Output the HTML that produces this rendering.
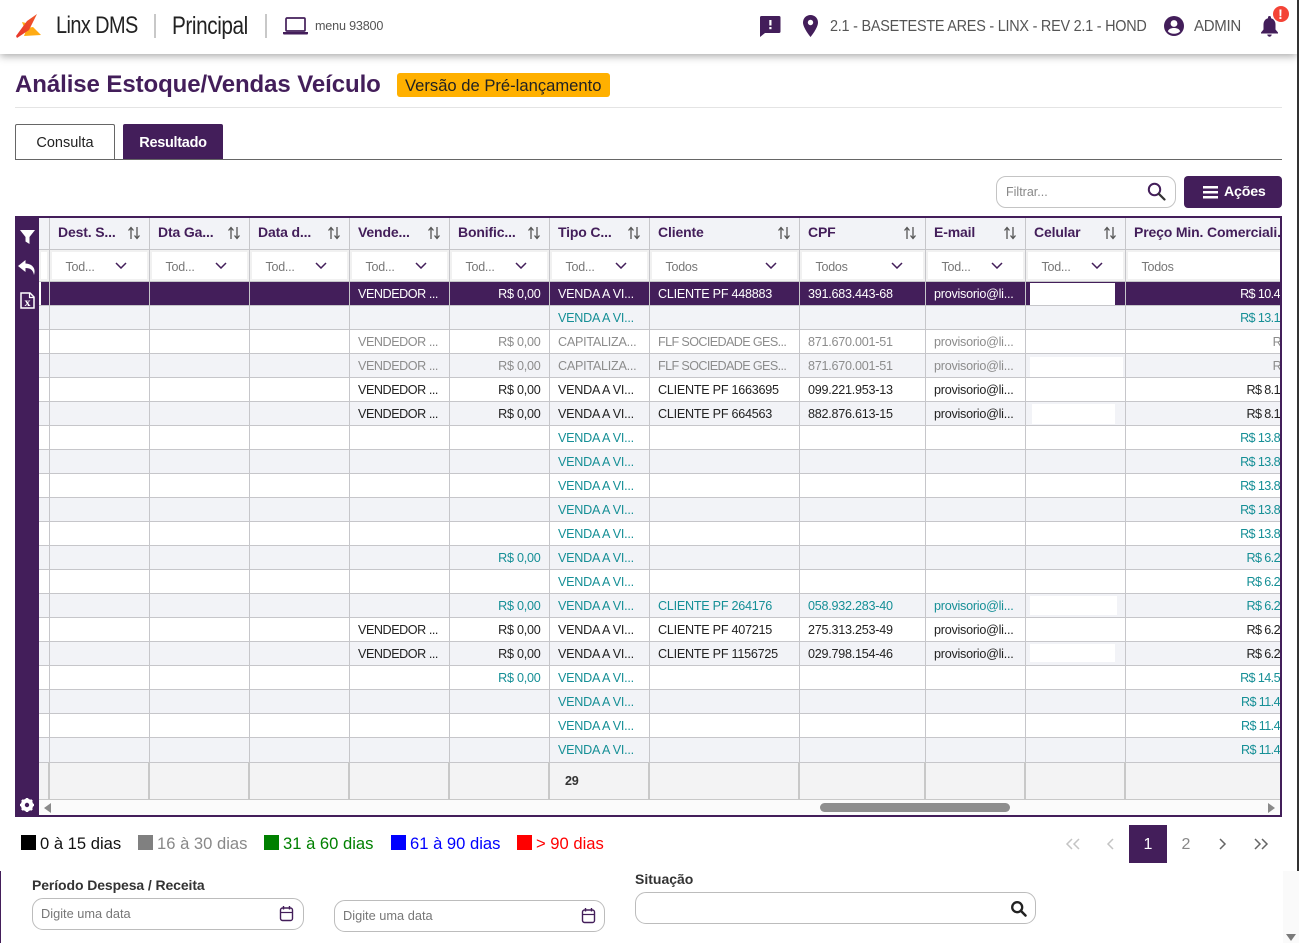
<!DOCTYPE html>
<html lang="pt-BR">
<head>
<meta charset="utf-8">
<title>Linx DMS</title>
<style>
html,body{margin:0;padding:0;width:1299px;height:943px;overflow:hidden;background:#fff;font-family:"Liberation Sans",sans-serif;color:#333}
*{box-sizing:border-box}
.a{position:absolute;white-space:nowrap}
svg{position:absolute;display:block}
#wrap{position:absolute;left:15px;top:216px;width:1267px;height:601px;border:2px solid #431e5a;border-left:0;overflow:hidden;background:#fff}
#side{position:absolute;left:0;top:0;width:24px;height:599px;background:#431e5a}
#clip{position:absolute;left:24px;top:0;width:1241px;height:582px;overflow:hidden}
table{position:absolute;left:0;top:0;border-collapse:collapse;table-layout:fixed;width:1286px}
td,th{padding:0 0 0 8.5px;border:1px solid #c6c6ca;font-size:12.6px;letter-spacing:-.25px;white-space:nowrap;overflow:hidden;font-weight:400;text-align:left}
td:first-child,th:first-child{padding:0;border-left:0}
tr.h th{height:31px;background:#f2f3f7;color:#431e5a;font-weight:700;font-size:14px;letter-spacing:-.15px;border-top:0;position:relative;padding-bottom:2px}
tr.f td{height:32px;background:#fff;color:#777;padding-left:16px;padding-top:3px;box-shadow:inset 0 0 0 2px #f1f1f1;position:relative;font-size:12.5px}
tr.r td{height:24px;color:#222;padding-top:2px}
tr.r:nth-child(even) td{background:#fff}
tr.r.g td{background:#f2f3f7!important}
tr.s td{background:#431e5a!important;color:#fff}
tr.s td:first-child{box-shadow:inset 2px 0 0 #fff}
tr.m td{color:#8c8c8c}
tr.l td{padding-top:0}
td.v{color:#158f96!important}
tr.t td{height:37px;background:#f3f3f4;border-width:1px 2px 1px 2px;border-color:#c8c8c8;font-weight:700;color:#333;padding-left:15px}
td.p{text-align:right;padding:2px 8px 0 0}
td.q{text-align:right;padding:2px 16px 0 0;letter-spacing:-.6px}
tr.l td.q{padding-top:0}
td.n{letter-spacing:-.45px}
td.w{letter-spacing:-.62px}
.so{position:absolute;right:8px;top:8px;width:14px;height:14px}
.ch{position:absolute;right:22px;top:12px}
.bl{position:absolute;background:#fff}
.lg{position:absolute;top:835px;font-size:16.6px;height:18px;line-height:18px;white-space:nowrap}
.lg i{display:inline-block;width:15px;height:15px;vertical-align:-1px;margin-right:4px}
.pg{position:absolute;top:825px;width:38px;height:38px;line-height:40px;text-align:center;font-size:16px;color:#888}
.inp{position:absolute;border:1px solid #bcbcbc;border-radius:11px;background:#fff;font-size:12.8px;color:#777}
</style>
</head>
<body>

<!-- top bar -->
<div class="a" style="left:0;top:0;width:1297px;height:54px;background:#fff;box-shadow:0 2px 8px rgba(0,0,0,.35)"></div>
<svg style="left:15px;top:13px" width="27" height="26" viewBox="0 0 27 26">
<defs><linearGradient id="lg1" x1="0" y1="1" x2="1" y2="0"><stop offset="0" stop-color="#e8352a"/><stop offset="1" stop-color="#f0582a"/></linearGradient></defs>
<polygon points="7,9 15,11 10,17" fill="#ffb21a"/>
<polygon points="12,15 18,14 26,22 9,23" fill="#ffab14"/>
<polygon points="22,1 12,8 1,23 2,25 14,17 18,9" fill="url(#lg1)"/>
</svg>
<div class="a" style="left:56px;top:12px;font-size:24px;line-height:28px;color:#222;letter-spacing:-.7px;transform-origin:0 0;transform:scaleX(.83)">Linx DMS</div>
<div class="a" style="left:154px;top:14px;width:2px;height:24px;background:#c8c8c8"></div>
<div class="a" style="left:172px;top:12px;font-size:25px;line-height:28px;color:#222;letter-spacing:-.5px;transform-origin:0 0;transform:scaleX(.83)">Principal</div>
<div class="a" style="left:265px;top:14px;width:2px;height:24px;background:#c8c8c8"></div>
<svg style="left:282px;top:16px" width="27" height="20" viewBox="0 0 27 20"><rect x="4" y="2" width="19" height="13" rx="1" fill="none" stroke="#431e5a" stroke-width="1.7"/><path d="M1 16h25v1.500q0 1-1 1H2q-1 0-1-1z" fill="#431e5a"/></svg>
<div class="a" style="left:315px;top:18px;font-size:13px;line-height:16px;color:#555;letter-spacing:-.2px;transform-origin:0 0;transform:scaleX(.97)">menu 93800</div>

<svg style="left:760px;top:16px" width="21" height="21" viewBox="0 0 21 21"><path d="M1.500 0h17.500q1.500 0 1.500 1.500v14q0 1.500-1.500 1.500H5l-5 4V1.500Q0 0 1.500 0z" fill="#431e5a"/><rect x="9.300" y="4" width="2.200" height="5.500" fill="#fff"/><rect x="9.300" y="11" width="2.200" height="2.200" fill="#fff"/></svg>
<svg style="left:803px;top:15px" width="15" height="22" viewBox="0 0 15 22"><path d="M7.500 0C3.300 0 0 3.300 0 7.500 0 13 7.500 22 7.500 22S15 13 15 7.500C15 3.300 11.700 0 7.500 0z" fill="#431e5a"/><circle cx="7.500" cy="7.500" r="2.700" fill="#fff"/></svg>
<div class="a" style="left:830px;top:18px;font-size:15.5px;line-height:18px;color:#555;letter-spacing:-.25px;transform-origin:0 0;transform:scaleX(.93)">2.1 - BASETESTE ARES - LINX - REV 2.1 - HOND</div>
<svg style="left:1164px;top:16px" width="20" height="20" viewBox="0 0 20 20"><circle cx="10" cy="10" r="10" fill="#431e5a"/><circle cx="10" cy="7.500" r="3.400" fill="#fff"/><path d="M3.800 15.200C5 12.600 7.500 12 10 12s5 .6 6.200 3.200C14.800 16.800 12.500 17.800 10 17.800s-4.800-1-6.200-2.600z" fill="#fff"/></svg>
<div class="a" style="left:1194px;top:18px;font-size:15.500px;line-height:18px;color:#555;letter-spacing:-.3px;transform-origin:0 0;transform:scaleX(.97)">ADMIN</div>
<svg style="left:1260px;top:15px" width="19" height="22" viewBox="0 0 19 22"><path d="M9.500 1a1.500 1.500 0 0 1 1.500 1.500v.7c3 .8 4.500 3.300 4.500 6.300v5l2.500 3v1H1v-1l2.500-3v-5c0-3 1.500-5.500 4.500-6.300v-.7A1.500 1.500 0 0 1 9.500 1z" fill="#431e5a"/><path d="M7.300 19.500h4.400a2.200 2.200 0 0 1-4.400 0z" fill="#431e5a"/></svg>
<div class="a" style="left:1272.500px;top:5.500px;width:16px;height:16px;border-radius:50%;background:#f44336;color:#fff;font-weight:700;font-size:14px;line-height:16px;text-align:center">!</div>
<div class="a" style="left:1297px;top:0;width:2px;height:871px;background:#333"></div>

<!-- page title -->
<div class="a" style="left:15px;top:70px;font-size:24px;line-height:30px;font-weight:700;color:#431e5a;letter-spacing:-.08px">Análise Estoque/Vendas Veículo</div>
<div class="a" style="left:397px;top:73px;width:213px;height:24px;background:#ffb000;border-radius:3px;color:#222;font-size:16.6px;line-height:25px;padding-left:8px">Versão de Pré-lançamento</div>
<div class="a" style="left:15px;top:107px;width:1267px;height:1px;background:#e4e4e4"></div>

<!-- tabs -->
<div class="a" style="left:15px;top:124px;width:100px;height:36px;border:1px solid #666;border-bottom:0;border-radius:2px 2px 0 0;background:#fff;color:#222;font-size:14.500px;line-height:36px;text-align:center">Consulta</div>
<div class="a" style="left:123px;top:124px;width:100px;height:36px;background:#431e5a;border-radius:2px 2px 0 0;color:#fff;font-size:14.500px;line-height:38px;text-align:center;font-weight:700;letter-spacing:-.3px">Resultado</div>
<div class="a" style="left:15px;top:159px;width:1267px;height:1px;background:#666"></div>

<!-- filter & actions -->
<div class="a" style="left:996px;top:176px;width:180px;height:32px;border:1px solid #c4c4c4;border-radius:10px;background:#fff;color:#888;font-size:12.500px;line-height:30px;padding-left:9px">Filtrar...</div>
<svg style="left:1147px;top:182px" width="19" height="19" viewBox="0 0 19 19"><circle cx="7.500" cy="7.500" r="5.700" fill="none" stroke="#431e5a" stroke-width="2"/><path d="M11.800 11.800l5.700 5.700" stroke="#333" stroke-width="2.200" stroke-linecap="round"/></svg>
<div class="a" style="left:1184px;top:176px;width:98px;height:32px;background:#431e5a;border-radius:4px"></div>
<svg style="left:1203px;top:186px" width="15" height="13" viewBox="0 0 15 13"><rect width="15" height="2.500" fill="#fff"/><rect y="5" width="15" height="2.500" fill="#fff"/><rect y="10" width="15" height="2.500" fill="#fff"/></svg>
<div class="a" style="left:1224px;top:183px;color:#fff;font-size:14.200px;line-height:18px;font-weight:700;letter-spacing:-.2px">Ações</div>

<!-- grid -->
<div id="wrap">
<div id="side">
<svg style="left:5px;top:12px" width="15" height="14" viewBox="0 0 15 14"><path d="M0 0h15L9.500 7v7L5.500 11.500V7z" fill="#fff"/></svg>
<svg style="left:3px;top:41px" width="18" height="17" viewBox="0 0 18 17"><path d="M7.500 1L0 7l7.500 6V9c4.500 0 7.500 1.500 8.500 7 2-6-1-11-8.500-11.500z" fill="#fff"/></svg>
<svg style="left:5px;top:74px" width="15" height="17" viewBox="0 0 15 17"><path d="M1 1h9l4 4v11H1z" fill="#431e5a" stroke="#fff" stroke-width="1.500"/><path d="M9.500 1v4.500H14" fill="none" stroke="#fff" stroke-width="1.200"/><text x="7.500" y="14" text-anchor="middle" font-family="Liberation Serif,serif" font-weight="700" font-size="12" fill="#fff">x</text></svg>
<svg style="left:5px;top:580px" width="14" height="14" viewBox="0 0 14 14"><circle cx="7" cy="7" r="4.600" fill="none" stroke="#fff" stroke-width="3.200"/><g stroke="#fff" stroke-width="2.600"><path d="M7 0v14M0 7h14M2 2l10 10M12 2L2 12"/></g><circle cx="7" cy="7" r="2.200" fill="#431e5a"/></svg>
</div>
<div id="clip">
<table>
<colgroup><col style="width:10px"><col style="width:100px"><col style="width:100px"><col style="width:100px"><col style="width:100px"><col style="width:100px"><col style="width:100px"><col style="width:150px"><col style="width:126px"><col style="width:100px"><col style="width:100px"><col style="width:200px"></colgroup>
<tbody>
<tr class="h"><th></th>
<th>Dest. S...<svg class="so" viewBox="0 0 14 14"><path d="M4 13V2M1.500 4.500L4 1.500l2.500 3M10 1v11M7.500 9.500L10 12.500l2.500-3" fill="none" stroke="#555" stroke-width="1.300"/></svg></th>
<th>Dta Ga...<svg class="so" viewBox="0 0 14 14"><path d="M4 13V2M1.500 4.500L4 1.500l2.500 3M10 1v11M7.500 9.500L10 12.500l2.500-3" fill="none" stroke="#555" stroke-width="1.300"/></svg></th>
<th>Data d...<svg class="so" viewBox="0 0 14 14"><path d="M4 13V2M1.500 4.500L4 1.500l2.500 3M10 1v11M7.500 9.500L10 12.500l2.500-3" fill="none" stroke="#555" stroke-width="1.300"/></svg></th>
<th>Vende...<svg class="so" viewBox="0 0 14 14"><path d="M4 13V2M1.500 4.500L4 1.500l2.500 3M10 1v11M7.500 9.500L10 12.500l2.500-3" fill="none" stroke="#555" stroke-width="1.300"/></svg></th>
<th>Bonific...<svg class="so" viewBox="0 0 14 14"><path d="M4 13V2M1.500 4.500L4 1.500l2.500 3M10 1v11M7.500 9.500L10 12.500l2.500-3" fill="none" stroke="#555" stroke-width="1.300"/></svg></th>
<th>Tipo C...<svg class="so" viewBox="0 0 14 14"><path d="M4 13V2M1.500 4.500L4 1.500l2.500 3M10 1v11M7.500 9.500L10 12.500l2.500-3" fill="none" stroke="#555" stroke-width="1.300"/></svg></th>
<th>Cliente<svg class="so" viewBox="0 0 14 14"><path d="M4 13V2M1.500 4.500L4 1.500l2.500 3M10 1v11M7.500 9.500L10 12.500l2.500-3" fill="none" stroke="#555" stroke-width="1.300"/></svg></th>
<th>CPF<svg class="so" viewBox="0 0 14 14"><path d="M4 13V2M1.500 4.500L4 1.500l2.500 3M10 1v11M7.500 9.500L10 12.500l2.500-3" fill="none" stroke="#555" stroke-width="1.300"/></svg></th>
<th>E-mail<svg class="so" viewBox="0 0 14 14"><path d="M4 13V2M1.500 4.500L4 1.500l2.500 3M10 1v11M7.500 9.500L10 12.500l2.500-3" fill="none" stroke="#555" stroke-width="1.300"/></svg></th>
<th>Celular<svg class="so" viewBox="0 0 14 14"><path d="M4 13V2M1.500 4.500L4 1.500l2.500 3M10 1v11M7.500 9.500L10 12.500l2.500-3" fill="none" stroke="#555" stroke-width="1.300"/></svg></th>
<th>Preço Min. Comerciali...</th></tr>
<tr class="f"><td></td>
<td>Tod...<svg class="ch" width="12" height="7" viewBox="0 0 12 7"><path d="M1 1l5 5 5-5" fill="none" stroke="#431e5a" stroke-width="1.500"/></svg></td>
<td>Tod...<svg class="ch" width="12" height="7" viewBox="0 0 12 7"><path d="M1 1l5 5 5-5" fill="none" stroke="#431e5a" stroke-width="1.500"/></svg></td>
<td>Tod...<svg class="ch" width="12" height="7" viewBox="0 0 12 7"><path d="M1 1l5 5 5-5" fill="none" stroke="#431e5a" stroke-width="1.500"/></svg></td>
<td>Tod...<svg class="ch" width="12" height="7" viewBox="0 0 12 7"><path d="M1 1l5 5 5-5" fill="none" stroke="#431e5a" stroke-width="1.500"/></svg></td>
<td>Tod...<svg class="ch" width="12" height="7" viewBox="0 0 12 7"><path d="M1 1l5 5 5-5" fill="none" stroke="#431e5a" stroke-width="1.500"/></svg></td>
<td>Tod...<svg class="ch" width="12" height="7" viewBox="0 0 12 7"><path d="M1 1l5 5 5-5" fill="none" stroke="#431e5a" stroke-width="1.500"/></svg></td>
<td>Todos<svg class="ch" width="12" height="7" viewBox="0 0 12 7"><path d="M1 1l5 5 5-5" fill="none" stroke="#431e5a" stroke-width="1.500"/></svg></td>
<td>Todos<svg class="ch" width="12" height="7" viewBox="0 0 12 7"><path d="M1 1l5 5 5-5" fill="none" stroke="#431e5a" stroke-width="1.500"/></svg></td>
<td>Tod...<svg class="ch" width="12" height="7" viewBox="0 0 12 7"><path d="M1 1l5 5 5-5" fill="none" stroke="#431e5a" stroke-width="1.500"/></svg></td>
<td>Tod...<svg class="ch" width="12" height="7" viewBox="0 0 12 7"><path d="M1 1l5 5 5-5" fill="none" stroke="#431e5a" stroke-width="1.500"/></svg></td>
<td>Todos</td></tr>
<tr class="r s"><td></td><td></td><td></td><td></td><td class="n">VENDEDOR ...</td><td class="p">R$ 0,00</td><td>VENDA A VI...</td><td>CLIENTE PF 448883</td><td>391.683.443-68</td><td>provisorio@li...</td><td></td><td class="q">R$ 10.490,00</td></tr>
<tr class="r g"><td></td><td></td><td></td><td></td><td></td><td></td><td class="v">VENDA A VI...</td><td></td><td></td><td></td><td></td><td class="q v">R$ 13.190,00</td></tr>
<tr class="r m"><td></td><td></td><td></td><td></td><td class="n">VENDEDOR ...</td><td class="p">R$ 0,00</td><td>CAPITALIZA...</td><td class="w">FLF SOCIEDADE GES...</td><td>871.670.001-51</td><td>provisorio@li...</td><td></td><td class="q" style="padding-right:12px">R$ 0,00</td></tr>
<tr class="r m g"><td></td><td></td><td></td><td></td><td class="n">VENDEDOR ...</td><td class="p">R$ 0,00</td><td>CAPITALIZA...</td><td class="w">FLF SOCIEDADE GES...</td><td>871.670.001-51</td><td>provisorio@li...</td><td></td><td class="q" style="padding-right:12px">R$ 0,00</td></tr>
<tr class="r"><td></td><td></td><td></td><td></td><td class="n">VENDEDOR ...</td><td class="p">R$ 0,00</td><td>VENDA A VI...</td><td>CLIENTE PF 1663695</td><td>099.221.953-13</td><td>provisorio@li...</td><td></td><td class="q">R$ 8.190,00</td></tr>
<tr class="r g"><td></td><td></td><td></td><td></td><td class="n">VENDEDOR ...</td><td class="p">R$ 0,00</td><td>VENDA A VI...</td><td>CLIENTE PF 664563</td><td>882.876.613-15</td><td>provisorio@li...</td><td></td><td class="q">R$ 8.190,00</td></tr>
<tr class="r"><td></td><td></td><td></td><td></td><td></td><td></td><td class="v">VENDA A VI...</td><td></td><td></td><td></td><td></td><td class="q v">R$ 13.890,00</td></tr>
<tr class="r g"><td></td><td></td><td></td><td></td><td></td><td></td><td class="v">VENDA A VI...</td><td></td><td></td><td></td><td></td><td class="q v">R$ 13.890,00</td></tr>
<tr class="r"><td></td><td></td><td></td><td></td><td></td><td></td><td class="v">VENDA A VI...</td><td></td><td></td><td></td><td></td><td class="q v">R$ 13.890,00</td></tr>
<tr class="r g"><td></td><td></td><td></td><td></td><td></td><td></td><td class="v">VENDA A VI...</td><td></td><td></td><td></td><td></td><td class="q v">R$ 13.890,00</td></tr>
<tr class="r"><td></td><td></td><td></td><td></td><td></td><td></td><td class="v">VENDA A VI...</td><td></td><td></td><td></td><td></td><td class="q v">R$ 13.890,00</td></tr>
<tr class="r g"><td></td><td></td><td></td><td></td><td></td><td class="p v">R$ 0,00</td><td class="v">VENDA A VI...</td><td></td><td></td><td></td><td></td><td class="q v">R$ 6.290,00</td></tr>
<tr class="r"><td></td><td></td><td></td><td></td><td></td><td></td><td class="v">VENDA A VI...</td><td></td><td></td><td></td><td></td><td class="q v">R$ 6.290,00</td></tr>
<tr class="r g"><td></td><td></td><td></td><td></td><td></td><td class="p v">R$ 0,00</td><td class="v">VENDA A VI...</td><td class="v">CLIENTE PF 264176</td><td class="v">058.932.283-40</td><td class="v">provisorio@li...</td><td></td><td class="q v">R$ 6.290,00</td></tr>
<tr class="r"><td></td><td></td><td></td><td></td><td class="n">VENDEDOR ...</td><td class="p">R$ 0,00</td><td>VENDA A VI...</td><td>CLIENTE PF 407215</td><td>275.313.253-49</td><td>provisorio@li...</td><td></td><td class="q">R$ 6.290,00</td></tr>
<tr class="r g"><td></td><td></td><td></td><td></td><td class="n">VENDEDOR ...</td><td class="p">R$ 0,00</td><td>VENDA A VI...</td><td>CLIENTE PF 1156725</td><td>029.798.154-46</td><td>provisorio@li...</td><td></td><td class="q">R$ 6.290,00</td></tr>
<tr class="r"><td></td><td></td><td></td><td></td><td></td><td class="p v">R$ 0,00</td><td class="v">VENDA A VI...</td><td></td><td></td><td></td><td></td><td class="q v">R$ 14.590,00</td></tr>
<tr class="r g"><td></td><td></td><td></td><td></td><td></td><td></td><td class="v">VENDA A VI...</td><td></td><td></td><td></td><td></td><td class="q v">R$ 11.490,00</td></tr>
<tr class="r"><td></td><td></td><td></td><td></td><td></td><td></td><td class="v">VENDA A VI...</td><td></td><td></td><td></td><td></td><td class="q v">R$ 11.490,00</td></tr>
<tr class="r g l" style="height:25px"><td style="height:25px"></td><td></td><td></td><td></td><td></td><td></td><td class="v">VENDA A VI...</td><td></td><td></td><td></td><td></td><td class="q v">R$ 11.490,00</td></tr>
<tr class="t"><td></td><td></td><td></td><td></td><td></td><td></td><td>29</td><td></td><td></td><td></td><td></td><td></td></tr>
</tbody>
</table>
<div class="bl" style="left:991px;top:65px;width:85px;height:22px"></div>
<div class="bl" style="left:991px;top:139px;width:93px;height:20px"></div>
<div class="bl" style="left:993px;top:186px;width:83px;height:20px"></div>
<div class="bl" style="left:991px;top:378px;width:87px;height:19px"></div>
<div class="bl" style="left:991px;top:426px;width:85px;height:18px"></div>
</div>
<!-- scrollbar -->
<div style="position:absolute;left:24px;top:582px;width:1241px;height:17px;background:#fbfbfb"></div>
<svg style="left:29px;top:585px" width="8" height="10" viewBox="0 0 8 10"><path d="M7 0v10L0 5z" fill="#8a8a8a"/></svg>
<div style="position:absolute;left:805px;top:585px;width:190px;height:9px;border-radius:5px;background:#8e8e8e"></div>
<svg style="left:1253px;top:585px" width="8" height="10" viewBox="0 0 8 10"><path d="M0 0v10l7-5z" fill="#8a8a8a"/></svg>
</div>

<!-- legend -->
<div class="lg" style="left:21px;color:#111"><i style="background:#000"></i>0 à 15 dias</div>
<div class="lg" style="left:138px;color:#888"><i style="background:#808080"></i>16 à 30 dias</div>
<div class="lg" style="left:264px;color:#008000"><i style="background:#008000"></i>31 à 60 dias</div>
<div class="lg" style="left:391px;color:#00f"><i style="background:#00f"></i>61 à 90 dias</div>
<div class="lg" style="left:517px;color:#f00"><i style="background:#f00"></i>&gt; 90 dias</div>

<!-- pagination -->
<svg style="left:1065px;top:838px" width="16" height="12" viewBox="0 0 16 12"><path d="M7 1L2 6l5 5M14 1L9 6l5 5" fill="none" stroke="#c4c4c4" stroke-width="1.500"/></svg>
<svg style="left:1105px;top:838px" width="10" height="12" viewBox="0 0 10 12"><path d="M8 1L3 6l5 5" fill="none" stroke="#c4c4c4" stroke-width="1.500"/></svg>
<div class="pg" style="left:1129px;background:#431e5a;color:#fff">1</div>
<div class="pg" style="left:1167px">2</div>
<svg style="left:1218px;top:838px" width="10" height="12" viewBox="0 0 10 12"><path d="M2 1l5 5-5 5" fill="none" stroke="#666" stroke-width="1.500"/></svg>
<svg style="left:1253px;top:838px" width="16" height="12" viewBox="0 0 16 12"><path d="M2 1l5 5-5 5M9 1l5 5-5 5" fill="none" stroke="#666" stroke-width="1.500"/></svg>

<!-- form -->
<div class="a" style="left:0;top:871px;width:1px;height:72px;background:#431e5a"></div>
<div class="a" style="left:32px;top:877px;font-size:14px;line-height:16px;font-weight:700;color:#333;letter-spacing:-.1px">Período Despesa / Receita</div>
<div class="inp" style="left:32px;top:898px;width:272px;height:32px;line-height:29px;padding-left:8px">Digite uma data</div>
<div class="inp" style="left:334px;top:900px;width:271px;height:32px;line-height:29px;padding-left:8px">Digite uma data</div>
<svg style="left:279px;top:905px" width="15" height="17" viewBox="0 0 15 17"><rect x="1.500" y="3" width="12" height="12.500" rx="2" fill="none" stroke="#431e5a" stroke-width="1.400"/><path d="M1.500 7.500h12" stroke="#431e5a" stroke-width="1.200"/><path d="M4.500 1v3.500M10.500 1v3.500" stroke="#431e5a" stroke-width="1.400"/></svg>
<svg style="left:581px;top:907px" width="15" height="17" viewBox="0 0 15 17"><rect x="1.500" y="3" width="12" height="12.500" rx="2" fill="none" stroke="#431e5a" stroke-width="1.400"/><path d="M1.500 7.500h12" stroke="#431e5a" stroke-width="1.200"/><path d="M4.500 1v3.500M10.500 1v3.500" stroke="#431e5a" stroke-width="1.400"/></svg>
<div class="a" style="left:635px;top:871px;font-size:14px;line-height:16px;font-weight:700;color:#333">Situação</div>
<div class="inp" style="left:635px;top:892px;width:401px;height:32px"></div>
<svg style="left:1010px;top:900px" width="17" height="17" viewBox="0 0 17 17"><circle cx="7.200" cy="7.200" r="5" fill="none" stroke="#222" stroke-width="2.300"/><path d="M10.800 10.800l4.700 4.700" stroke="#222" stroke-width="2.500" stroke-linecap="round"/></svg>
<div class="a" style="left:1283px;top:871px;width:16px;height:72px;background:#fafafa"></div>
<svg style="left:1286px;top:934px" width="10" height="7" viewBox="0 0 10 7"><path d="M0 0h10L5 7z" fill="#7a7a7a"/></svg>

</body>
</html>
